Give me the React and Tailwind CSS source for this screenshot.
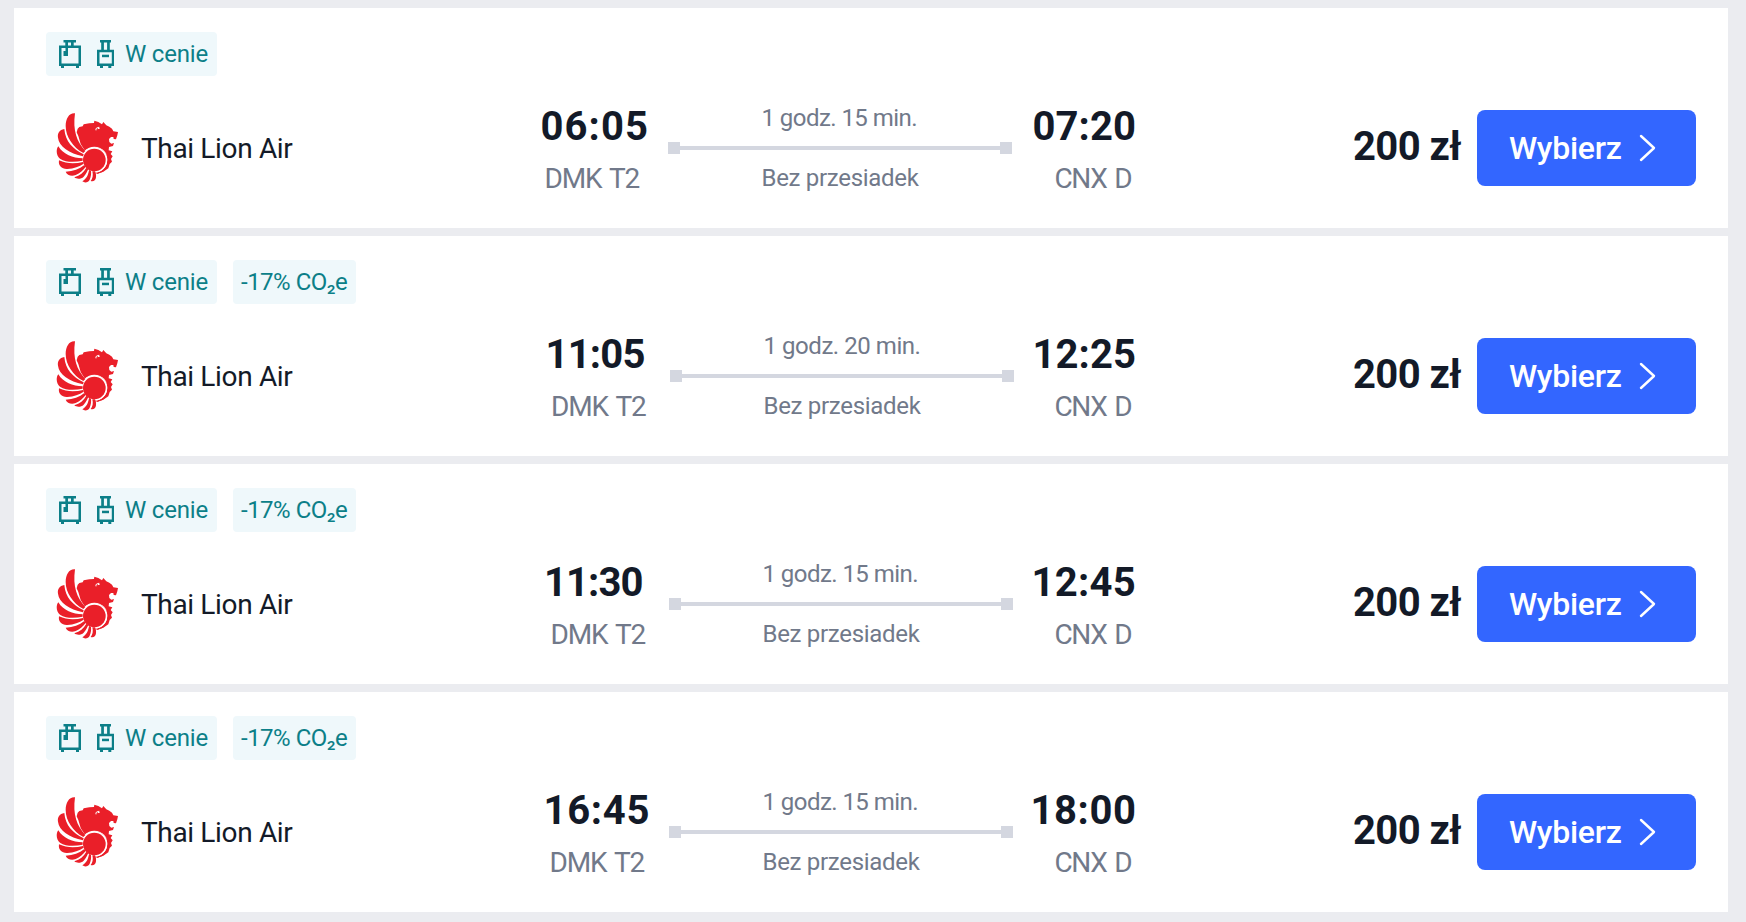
import React from "react";

const flights = [
  {
    depart: "06:05", arrive: "07:20", duration: "1 godz. 15 min.", co2: false,
    legClass: "w-[142px]",
    departClass: "ml-[14.5px] tracking-[1.1px]", fromClass: "ml-[18.5px]",
    arriveClass: "ml-[20.5px] tracking-[0.1px]", toClass: "ml-[42.5px]",
    durationClass: "tracking-[-0.55px]",
  },
  {
    depart: "11:05", arrive: "12:25", duration: "1 godz. 20 min.", co2: true,
    legClass: "w-[144px]",
    departClass: "ml-[19.5px] tracking-[-0.8px]", fromClass: "ml-[25px]",
    arriveClass: "ml-[18.5px] tracking-[0.1px]", toClass: "ml-[40.5px]",
    durationClass: "tracking-[-0.45px]",
  },
  {
    depart: "11:30", arrive: "12:45", duration: "1 godz. 15 min.", co2: true,
    legClass: "w-[143px]",
    departClass: "ml-[18px] tracking-[-0.9px]", fromClass: "ml-[24.5px]",
    arriveClass: "ml-[18.5px] tracking-[0.3px]", toClass: "ml-[41.5px]",
    durationClass: "tracking-[-0.55px]",
  },
  {
    depart: "16:45", arrive: "18:00", duration: "1 godz. 15 min.", co2: true,
    legClass: "w-[143px]",
    departClass: "ml-[17.5px] tracking-[0.7px]", fromClass: "ml-[23.5px]",
    arriveClass: "ml-[17.5px] tracking-[0.6px]", toClass: "ml-[41.5px]",
    durationClass: "tracking-[-0.55px]",
  },
];

function CabinBagIcon() {
  return (
    <svg className="mr-4 h-7 w-[22px] shrink-0" viewBox="0 0 22 28" fill="currentColor">
      <path d="M4.500 0h12.500v2.500h-2.300V5.500H22v20.500h-2v2h-3v-2H5v2H2v-2H0V5.500h6.300V2.500H4.500zM9 2.500v3h3V2.500zM2.500 8v15.500h17V8H9v8H4.500v-5h2V8z" fillRule="evenodd" />
    </svg>
  );
}

function TrolleyIcon() {
  return (
    <svg className="mr-[11px] h-7 w-[17px] shrink-0" viewBox="0 0 17 28" fill="currentColor">
      <path d="M3 0h11v2.500h-1.200v7.200H17.300v16.300h-3v2h-3v-2H6v2H3v-2H0V9.700h4.200V2.500H3zM6.900 2.500v7.200h3.200V2.500zM2.500 12.200v11.300h12.300V12.200z" fillRule="evenodd" />
      <path d="M5 14.700h7v2.500H5z" />
    </svg>
  );
}

function LionLogo() {
  return (
    <svg className="ml-2.5 h-[72px] w-16 shrink-0" viewBox="48 36 192 216" fill="#ea1f29">
      <path d="M113 86 118 81 128 79 131 73 148 70 162 69 163 62 175 66 186 73 190 66 199 76 208 80 216 86 220 94 234 96 232 106 228 118 221 117 220 111 213 111 207 117 208 126 214 131 222 129 219 138 207 141 206 151 217 154 212 162 218 169 213 177 216 185 209 192 205 205 190 215 173 221 160 218 136 154 122 132 115 108 110 97Z" />
      <circle cx="163" cy="180" r="40" fill="#fff" />
      <path d="M165 143A37 37 0 0 1 165 217L172 221Q205 214 208 182Q202 150 165 143Z" fill="#ea1f29" />
      <circle cx="163" cy="180" r="38.500" fill="#fff" />
      <circle cx="163" cy="180" r="34" />
      <path d="M168 91Q166 82 178 82M173 86 179 85" fill="none" stroke="#fff" strokeWidth="3" />
      <path d="M105 40C88 38 77 55 77 78C77 110 99 142 130 159L136 153C110 125 98 92 105 40Z" />
      <path d="M73 87C58 89 52 100 54 113C57 140 88 160 129 169L131 163C99 147 76 125 73 87Z" />
      <path d="M55 139C47 149 49 168 60 176C78 188 105 187 128 182L128 175C98 174 70 164 55 139Z" />
      <path d="M57 181C54 198 66 208 82 207C102 206 118 199 131 191L129 186C105 192 80 192 57 181Z" />
      <path d="M77 215C81 226 95 230 107 225C120 220 130 210 137 201L133 195C118 207 100 214 77 215Z" />
      <path d="M103 232C111 239 124 237 131 230C138 223 142 214 145 207L139 203C131 217 120 227 103 232Z" />
      <path d="M127 244C135 250 145 247 149 239C153 230 154 220 153 212L147 210C145 224 140 236 127 244Z" />
      <path d="M152 243C160 246 167 241 168 232C169 224 167 218 165 214L157 214C160 226 158 236 152 243Z" />
    </svg>
  );
}

function FlightCard({ flight }) {
  return (
    <article className="h-[220px] bg-white px-8 pt-6">
      <div className="flex h-11 gap-4 text-2xl leading-[44px] text-[#0c7f88]">
        <div className="flex w-[171px] items-center rounded bg-[#eff8fb] pl-[13px]">
          <CabinBagIcon />
          <TrolleyIcon />
          <span className="tracking-[-0.2px]">W cenie</span>
        </div>
        {flight.co2 && (
          <div className="w-[123px] rounded bg-[#eff8fb] pl-2 tracking-[-0.5px]">-17% CO₂e</div>
        )}
      </div>

      <div className="mt-6 flex h-24 items-center">
        <div className="flex w-[480px] items-center">
          <LionLogo />
          <span className="ml-[21px] pt-0.5 text-[28px] leading-8 tracking-[-0.35px] text-[#131a28]">Thai Lion Air</span>
        </div>

        <div className={`${flight.legClass} flex shrink-0 flex-col items-start gap-4 pt-1.5`}>
          <span className={`${flight.departClass} text-[40px] leading-10 font-bold text-[#131a28]`}>{flight.depart}</span>
          <span className={`${flight.fromClass} text-[28px] leading-8 tracking-[-1.2px] text-[#71798a] [word-spacing:2.5px]`}>DMK T2</span>
        </div>

        <div className="flex w-[344px] shrink-0 flex-col gap-2.5 text-2xl leading-7 text-[#71798a]">
          <span className={`${flight.durationClass} pl-[93.5px]`}>{flight.duration}</span>
          <div className="flex h-3 items-center">
            <i className="size-3 bg-[#d4d7e0]" />
            <i className="h-1 flex-1 bg-[#d4d7e0]" />
            <i className="size-3 bg-[#d4d7e0]" />
          </div>
          <span className="pl-[93.5px] tracking-[-0.3px]">Bez przesiadek</span>
        </div>

        <div className="flex shrink-0 flex-col items-start gap-4 pt-1.5">
          <span className={`${flight.arriveClass} text-[40px] leading-10 font-bold text-[#131a28]`}>{flight.arrive}</span>
          <span className={`${flight.toClass} text-[28px] leading-8 tracking-[-1.4px] text-[#71798a] [word-spacing:2.5px]`}>CNX D</span>
        </div>

        <div className="ml-auto flex items-center">
          <span className="w-[124px] pb-0.5 text-[40px] leading-10 font-bold tracking-[-0.6px] text-[#131a28]">200 zł</span>
          <button className="flex h-[76px] w-[219px] items-center rounded-lg bg-[#3366ff] pl-8 text-[32px] leading-10 font-medium tracking-[-0.3px] text-white">
            Wybierz
            <svg className="ml-[18px] h-7 w-[18px]" viewBox="0 0 18 28" fill="none" stroke="currentColor" strokeWidth="2.400" strokeLinecap="round" strokeLinejoin="round">
              <path d="M2 2 15 14 2 26" />
            </svg>
          </button>
        </div>
      </div>
    </article>
  );
}

export default function App() {
  return (
    <main className="flex h-[922px] w-[1746px] flex-col gap-2 overflow-hidden bg-[#ebecf0] pt-2 pr-[18px] pl-3.5 font-['Roboto',sans-serif] whitespace-nowrap">
      {flights.map((flight) => (
        <FlightCard key={flight.depart} flight={flight} />
      ))}
    </main>
  );
}
